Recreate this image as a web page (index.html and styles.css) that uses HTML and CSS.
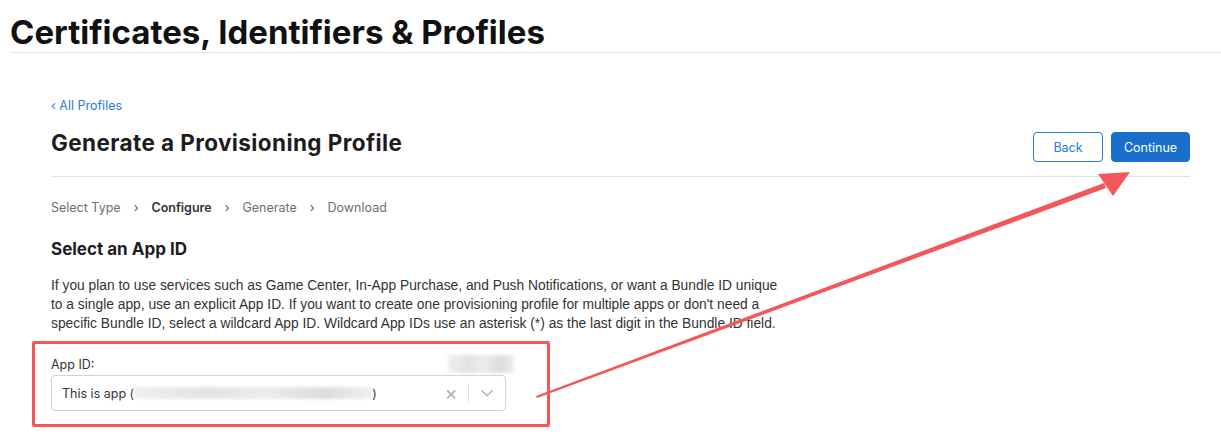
FILE: index.html
```html
<!DOCTYPE html>
<html lang="en">
<head>
    <meta charset="UTF-8">
    <title>Generate a Provisioning Profile</title>
    <link rel="stylesheet" href="styles.css">
</head>
<body>
    <div class="top">
        <h1>Certificates, Identifiers &amp; Profiles</h1>
    </div>

    <div class="content">
        <a class="back-link" href="#">&lsaquo; All Profiles</a>

        <div class="page-head">
            <h2>Generate a Provisioning Profile</h2>
            <div class="actions">
                <button class="btn btn-outline">Back</button>
                <button class="btn btn-primary">Continue</button>
            </div>
        </div>

        <div class="steps">
            <span>Select Type</span>
            <span class="sep">&rsaquo;</span>
            <span class="current">Configure</span>
            <span class="sep">&rsaquo;</span>
            <span>Generate</span>
            <span class="sep">&rsaquo;</span>
            <span>Download</span>
        </div>

        <h3>Select an App ID</h3>
        <p class="intro">If you plan to use services such as Game Center, In-App Purchase, and Push Notifications, or want a Bundle ID unique to a single app, use an explicit App ID. If you want to create one provisioning profile for multiple apps or don't need a specific Bundle ID, select a wildcard App ID. Wildcard App IDs use an asterisk (*) as the last digit in the Bundle ID field.</p>

        <div class="field highlight">
            <div class="field-label">
                <label>App ID:</label>
                <span class="blur blur-tag"></span>
            </div>
            <div class="select">
                <div class="select-value">This is app (<span class="blur blur-id"></span>)</div>
                <span class="clear">&times;</span>
                <span class="divider"></span>
                <span class="chevron">
                    <svg width="14" height="8" viewBox="0 0 14 8"><path d="M1.5 1.5 L7 6.5 L12.5 1.5" fill="none" stroke="#b3b3b3" stroke-width="1.4"/></svg>
                </span>
            </div>
        </div>
    </div>

    <svg class="annotation" width="1221" height="442" viewBox="0 0 1221 442">
        <polygon points="536,396 1104,183 1106,188 537,398" fill="#f4575a"/>
        <polygon points="1130,172 1098,174 1113,196" fill="#f4575a"/>
    </svg>
</body>
</html>
```

FILE: styles.css
```css
* {
    margin: 0;
    padding: 0;
    box-sizing: border-box;
}

body {
    font-family: Inter, "Liberation Sans", Arial, sans-serif;
    color: #1d1d1f;
    background: #fff;
    width: 1221px;
    height: 442px;
    overflow: hidden;
    position: relative;
}

.top {
    margin-left: 10px;
    padding-top: 12px;
    border-bottom: 1px solid #e5e5e5;
}

.top h1 {
    font-size: 33px;
    font-weight: 700;
    line-height: 40px;
    color: #111;
}

.content {
    padding: 0 31px 0 51px;
}

.back-link {
    display: inline-block;
    margin-top: 45px;
    font-size: 12.5px;
    color: #2b7bd6;
    text-decoration: none;
}

.page-head {
    display: flex;
    justify-content: space-between;
    align-items: flex-end;
    margin-top: 15px;
    padding-bottom: 14px;
    border-bottom: 1px solid #e2e2e2;
}

.page-head h2 {
    font-size: 22.5px;
    font-weight: 700;
    letter-spacing: 0.4px;
    line-height: 28px;
    margin-bottom: 5px;
    color: #1d1d1f;
}

.actions {
    display: flex;
    gap: 8px;
}

.btn {
    font-family: inherit;
    font-size: 12.5px;
    height: 30px;
    border-radius: 4px;
    cursor: pointer;
}

.btn-outline {
    width: 70px;
    background: #fff;
    color: #2b7bd6;
    border: 1px solid #2b7bd6;
}

.btn-primary {
    width: 79px;
    background: #1a6fcc;
    color: #fff;
    border: 1px solid #1a6fcc;
}

.steps {
    display: flex;
    gap: 13px;
    margin-top: 23px;
    font-size: 12.5px;
    color: #6e6e73;
}

.steps .current {
    color: #333;
    font-weight: 600;
}

.steps .sep {
    color: #555;
}

h3 {
    margin-top: 22px;
    font-size: 17px;
    font-weight: 700;
    line-height: 24px;
}

.intro {
    margin-top: 15px;
    max-width: 736px;
    font-family: "Liberation Sans", Arial, sans-serif;
    font-size: 13.8px;
    line-height: 19px;
    color: #333;
}

.field {
    position: relative;
    margin-top: 21px;
    width: 455px;
}

.highlight::before {
    content: "";
    position: absolute;
    left: -19px;
    top: -13px;
    width: 518px;
    height: 86px;
    box-sizing: border-box;
    border: 3px solid #f4575a;
    border-radius: 2px;
}

.field-label {
    display: flex;
    justify-content: space-between;
    align-items: center;
    height: 20px;
}

.field-label label {
    font-size: 12.5px;
    color: #333;
}

.blur {
    display: inline-block;
    background: linear-gradient(90deg, #ececec, #dcdcdc 30%, #e8e8e8 55%, #d4d4d4 80%, #ececec);
    opacity: 0.8;
    filter: blur(1.5px);
}

.blur-tag {
    width: 66px;
    height: 18px;
    margin-right: -8px;
}

.select {
    display: flex;
    align-items: center;
    height: 36px;
    margin-top: 1px;
    border: 1px solid #d2d2d7;
    border-radius: 4px;
    padding-left: 10px;
}

.select-value {
    flex: 1;
    display: flex;
    align-items: center;
    font-size: 12.5px;
    color: #333;
}

.blur-id {
    width: 238px;
    height: 12px;
}

.clear {
    font-size: 20px;
    color: #b3b3b3;
    width: 18px;
    text-align: center;
    margin-right: 8px;
}

.divider {
    width: 1px;
    height: 20px;
    background: #ddd;
}

.chevron {
    display: flex;
    align-items: center;
    justify-content: center;
    width: 36px;
}

.annotation {
    position: absolute;
    left: 0;
    top: 0;
    pointer-events: none;
}
```
